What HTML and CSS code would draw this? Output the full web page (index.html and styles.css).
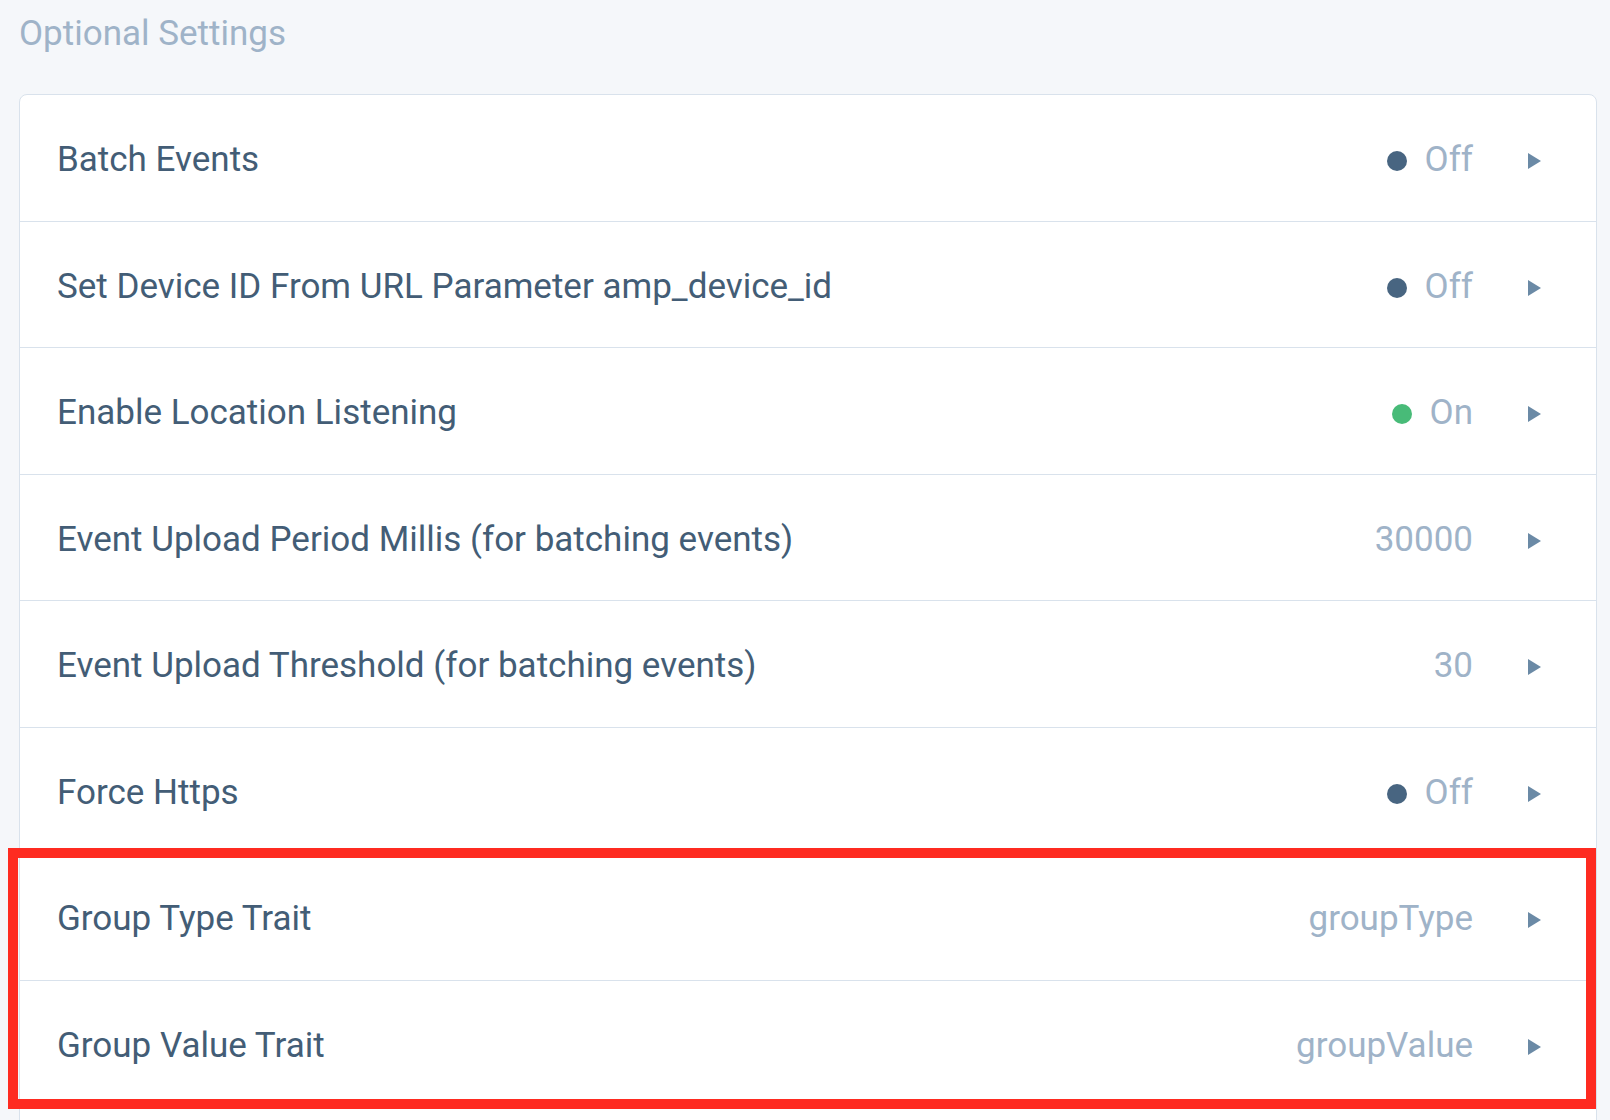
FILE: index.html
```html
<!DOCTYPE html>
<html lang="en">
<head>
<meta charset="utf-8">
<title>Optional Settings</title>
<link rel="stylesheet" href="styles.css">
</head>
<body>
  <main class="page">
    <h2 class="section-title">Optional Settings</h2>
    <div class="card">
      <div class="row">
        <span class="label">Batch Events</span>
        <span class="value"><span class="dot dot-off"></span>Off</span>
        <svg class="chev" viewBox="0 0 13 16" width="13" height="16"><polygon points="0,0 13,8 0,16"/></svg>
      </div>
      <div class="row">
        <span class="label">Set Device ID From URL Parameter amp_device_id</span>
        <span class="value"><span class="dot dot-off"></span>Off</span>
        <svg class="chev" viewBox="0 0 13 16" width="13" height="16"><polygon points="0,0 13,8 0,16"/></svg>
      </div>
      <div class="row">
        <span class="label">Enable Location Listening</span>
        <span class="value"><span class="dot dot-on"></span>On</span>
        <svg class="chev" viewBox="0 0 13 16" width="13" height="16"><polygon points="0,0 13,8 0,16"/></svg>
      </div>
      <div class="row">
        <span class="label">Event Upload Period Millis (for batching events)</span>
        <span class="value">30000</span>
        <svg class="chev" viewBox="0 0 13 16" width="13" height="16"><polygon points="0,0 13,8 0,16"/></svg>
      </div>
      <div class="row">
        <span class="label">Event Upload Threshold (for batching events)</span>
        <span class="value">30</span>
        <svg class="chev" viewBox="0 0 13 16" width="13" height="16"><polygon points="0,0 13,8 0,16"/></svg>
      </div>
      <div class="row">
        <span class="label">Force Https</span>
        <span class="value"><span class="dot dot-off"></span>Off</span>
        <svg class="chev" viewBox="0 0 13 16" width="13" height="16"><polygon points="0,0 13,8 0,16"/></svg>
      </div>
      <div class="row">
        <span class="label">Group Type Trait</span>
        <span class="value">groupType</span>
        <svg class="chev" viewBox="0 0 13 16" width="13" height="16"><polygon points="0,0 13,8 0,16"/></svg>
      </div>
      <div class="row">
        <span class="label">Group Value Trait</span>
        <span class="value">groupValue</span>
        <svg class="chev" viewBox="0 0 13 16" width="13" height="16"><polygon points="0,0 13,8 0,16"/></svg>
      </div>
    </div>
  </main>
  <div class="highlight" aria-hidden="true"></div>
</body>
</html>
```

FILE: styles.css
```css
html, body {
  margin: 0;
  padding: 0;
}

body {
  background: #f5f7fa;
  font-family: Roboto, "Liberation Sans", sans-serif;
  height: 1120px;
  overflow: hidden;
  position: relative;
}

.page {
  padding: 13px 13px 0 19px;
}

.section-title {
  margin: 0;
  font-size: 35px;
  font-weight: 400;
  line-height: 41px;
  color: #9fb3c8;
}

.card {
  margin-top: 40px;
  background: #ffffff;
  border: 1px solid #d9e2ec;
  border-radius: 8px;
  padding-bottom: 60px;
}

.row {
  display: flex;
  align-items: center;
  box-sizing: border-box;
  height: 126.5px;
  padding: 4px 55px 0 37px;
  border-bottom: 1px solid #d9e2ec;
  font-size: 35px;
}

.label {
  flex: 1;
  color: #435d76;
  white-space: nowrap;
}

.value {
  display: flex;
  align-items: center;
  color: #9fb3c8;
}

.dot {
  width: 20px;
  height: 20px;
  border-radius: 50%;
  margin-right: 18px;
  margin-top: 3px;
}

.dot-off {
  background: #486581;
}

.dot-on {
  background: #48bb78;
}

.chev {
  margin-left: 55px;
  margin-top: 3px;
  fill: #6b8aa6;
  flex: none;
}

.highlight {
  position: absolute;
  left: 8px;
  top: 848px;
  width: 1588px;
  height: 261px;
  box-sizing: border-box;
  border: 10px solid #fe2b21;
  pointer-events: none;
}
```
